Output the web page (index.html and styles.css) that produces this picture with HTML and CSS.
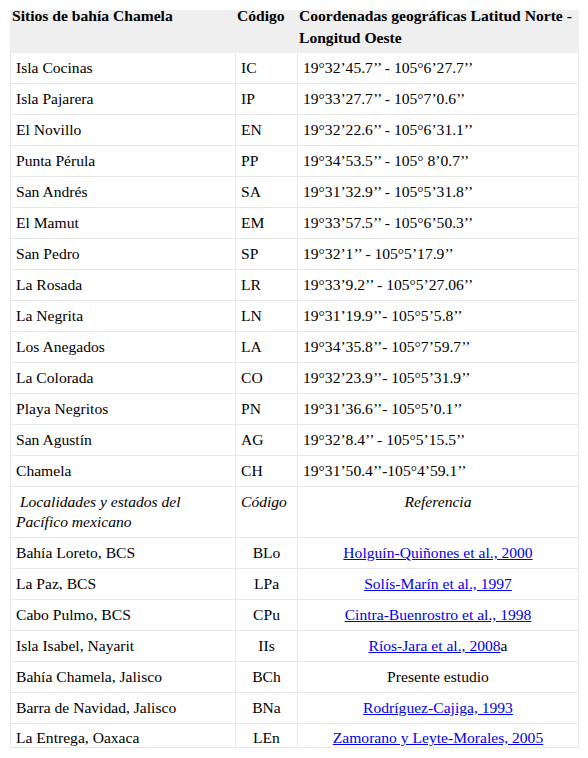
FILE: index.html
```html
<!DOCTYPE html>
<html lang="es">
<head>
<meta charset="utf-8">
<title>Sitios de bahía Chamela</title>
<link rel="stylesheet" href="styles.css">
</head>
<body>
<table class="tbl">
<colgroup><col class="c1"><col class="c2"><col class="c3"></colgroup>
<thead>
<tr><th><div class="hd">Sitios de bahía Chamela</div></th><th><div class="hd">Código</div></th><th><div class="hd">Coordenadas geográficas Latitud Norte - Longitud Oeste</div></th></tr>
</thead>
<tbody>
<tr><td>Isla Cocinas</td><td>IC</td><td>19°32’45.7’’ - 105°6’27.7’’</td></tr>
<tr><td>Isla Pajarera</td><td>IP</td><td>19°33’27.7’’ - 105°7’0.6’’</td></tr>
<tr><td>El Novillo</td><td>EN</td><td>19°32’22.6’’ - 105°6’31.1’’</td></tr>
<tr><td>Punta Pérula</td><td>PP</td><td>19°34’53.5’’ - 105° 8’0.7’’</td></tr>
<tr><td>San Andrés</td><td>SA</td><td>19°31’32.9’’ - 105°5’31.8’’</td></tr>
<tr><td>El Mamut</td><td>EM</td><td>19°33’57.5’’ - 105°6’50.3’’</td></tr>
<tr><td>San Pedro</td><td>SP</td><td>19°32’1’’ - 105°5’17.9’’</td></tr>
<tr><td>La Rosada</td><td>LR</td><td>19°33’9.2’’ - 105°5’27.06’’</td></tr>
<tr><td>La Negrita</td><td>LN</td><td>19°31’19.9’’- 105°5’5.8’’</td></tr>
<tr><td>Los Anegados</td><td>LA</td><td>19°34’35.8’’- 105°7’59.7’’</td></tr>
<tr><td>La Colorada</td><td>CO</td><td>19°32’23.9’’- 105°5’31.9’’</td></tr>
<tr><td>Playa Negritos</td><td>PN</td><td>19°31’36.6’’- 105°5’0.1’’</td></tr>
<tr><td>San Agustín</td><td>AG</td><td>19°32’8.4’’ - 105°5’15.5’’</td></tr>
<tr><td>Chamela</td><td>CH</td><td>19°31’50.4’’-105°4’59.1’’</td></tr>
<tr class="sub"><td>&nbsp;Localidades y estados del Pacífico mexicano</td><td>Código</td><td class="ctr">Referencia</td></tr>
<tr class="loc"><td>Bahía Loreto, BCS</td><td>BLo</td><td><a href="#">Holguín-Quiñones et al., 2000</a></td></tr>
<tr class="loc"><td>La Paz, BCS</td><td>LPa</td><td><a href="#">Solís-Marín et al., 1997</a></td></tr>
<tr class="loc"><td>Cabo Pulmo, BCS</td><td>CPu</td><td><a href="#">Cintra-Buenrostro et al., 1998</a></td></tr>
<tr class="loc"><td>Isla Isabel, Nayarit</td><td>IIs</td><td><a href="#">Ríos-Jara et al., 2008</a>a</td></tr>
<tr class="loc"><td>Bahía Chamela, Jalisco</td><td>BCh</td><td>Presente estudio</td></tr>
<tr class="loc"><td>Barra de Navidad, Jalisco</td><td>BNa</td><td><a href="#">Rodríguez-Cajiga, 1993</a></td></tr>
<tr class="loc last"><td>La Entrega, Oaxaca</td><td>LEn</td><td><a href="#">Zamorano y Leyte-Morales, 2005</a></td></tr>
</tbody>
</table>
</body>
</html>
```

FILE: styles.css
```css
html, body {
  margin: 0;
  padding: 0;
  background: #ffffff;
}
body {
  font-family: "Liberation Serif", "Times New Roman", serif;
  font-size: 15.6px;
  color: #000000;
}
.tbl {
  width: 568px;
  margin: 10px 10px 0;
  border-collapse: collapse;
  table-layout: fixed;
}
.c1 { width: 225px; }
.c2 { width: 62px; }
.c3 { width: 281px; }
.tbl th {
  background: #efefef;
  border: 1px solid #efefef;
  font-weight: bold;
  text-align: left;
  vertical-align: top;
  line-height: 22px;
  padding: 0 1px 3px 1px;
}
.hd {
  margin-top: -6px;
}
.tbl td {
  border: 1px solid #e8e8e8;
  line-height: 20px;
  padding: 5px 5px;
  vertical-align: top;
  text-align: left;
}
.sub td {
  font-style: italic;
}
.sub .ctr {
  text-align: center;
}
.loc td:nth-child(2),
.loc td:nth-child(3) {
  text-align: center;
}
.last td {
  padding-top: 4px;
  padding-bottom: 0;
  line-height: 19px;
}
a {
  color: #0000ee;
  text-decoration: underline;
}
```
